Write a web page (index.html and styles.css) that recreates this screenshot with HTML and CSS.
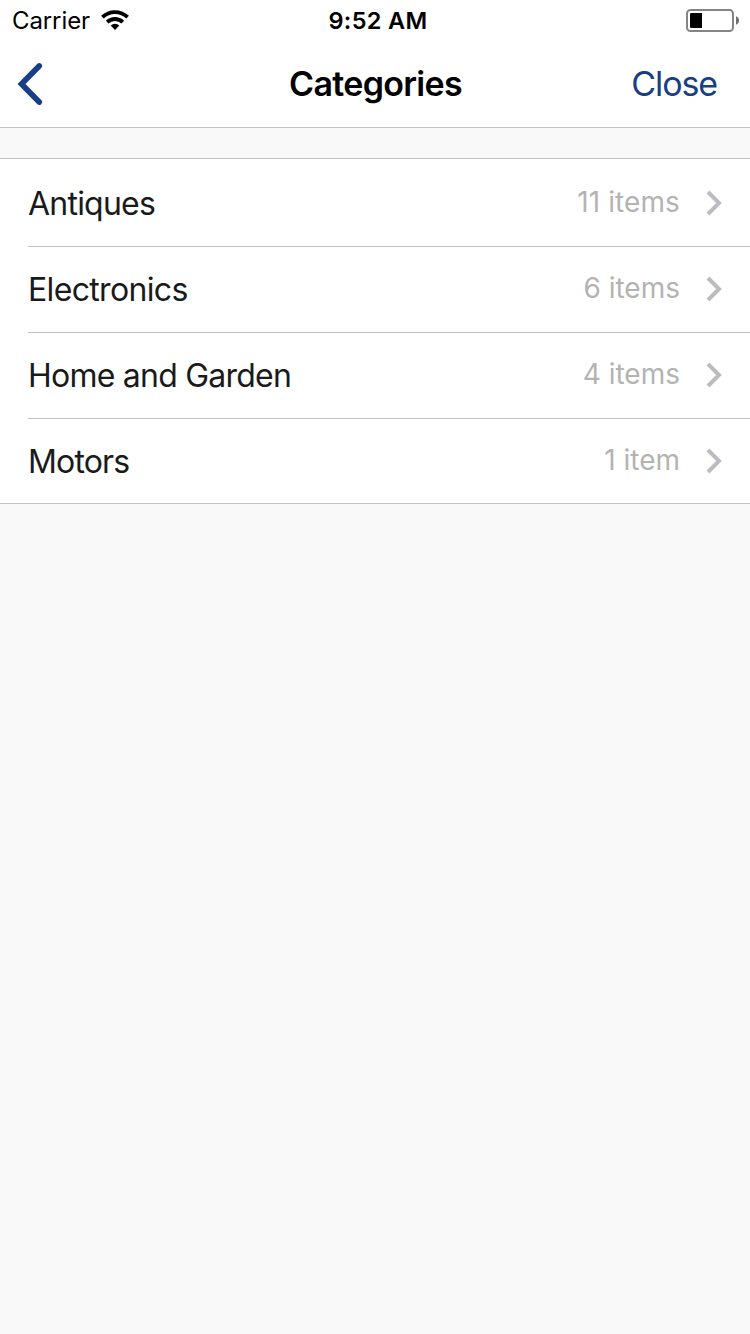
FILE: index.html
```html
<!DOCTYPE html>
<html lang="en">
<head>
<meta charset="utf-8">
<title>Categories</title>
<link rel="stylesheet" href="styles.css">
</head>
<body>
<header class="header">
  <div class="status">
    <div class="status-left">
      <span class="carrier">Carrier</span>
      <svg class="wifi" width="28" height="20" viewBox="0 0 28 20">
        <path d="M1.4 7.2A18.2 18.2 0 0 1 26.6 7.2" fill="none" stroke="#000" stroke-width="3.9"/>
        <path d="M6.2 12.1A11.4 11.4 0 0 1 21.8 12.1" fill="none" stroke="#000" stroke-width="3.8"/>
        <path d="M9.7 15.4A6.4 6.4 0 0 1 18.3 15.4L14 20Z"/>
      </svg>
    </div>
    <span class="time">9:52 AM</span>
    <svg class="battery" width="54" height="23" viewBox="0 0 54 23">
      <rect x="1" y="1" width="46" height="21" rx="3.5" fill="none" stroke="#858585" stroke-width="2"/>
      <path d="M5.2 4H16V19H5.2Q4 19 4 17.8V5.2Q4 4 5.2 4Z"/>
      <path d="M50 7.3Q53 8.4 53 11.5T50 15.7Z" fill="#707070"/>
    </svg>
  </div>
  <nav class="nav">
    <svg class="back" width="28" height="44" viewBox="0 0 28 44"><path d="M23.2 3.9L5.5 22L23.2 40.1" fill="none" stroke="#173e86" stroke-width="5.7" stroke-linecap="round" stroke-linejoin="miter"/></svg>
    <h1 class="title">Categories</h1>
    <span class="close">Close</span>
  </nav>
</header>
<ul class="list">
  <li class="row first"><span class="name">Antiques</span><span class="count eleven">11 items</span><svg class="chevron" width="18" height="26" viewBox="0 0 18 26"><path d="M2 2L13 13L2 24" fill="none" stroke="#bcbbc2" stroke-width="4"/></svg></li>
  <li class="row"><span class="name electronics">Electronics</span><span class="count">6 items</span><svg class="chevron" width="18" height="26" viewBox="0 0 18 26"><path d="M2 2L13 13L2 24" fill="none" stroke="#bcbbc2" stroke-width="4"/></svg></li>
  <li class="row"><span class="name">Home and Garden</span><span class="count">4 items</span><svg class="chevron" width="18" height="26" viewBox="0 0 18 26"><path d="M2 2L13 13L2 24" fill="none" stroke="#bcbbc2" stroke-width="4"/></svg></li>
  <li class="row last"><span class="name motors">Motors</span><span class="count">1 item</span><svg class="chevron" width="18" height="26" viewBox="0 0 18 26"><path d="M2 2L13 13L2 24" fill="none" stroke="#bcbbc2" stroke-width="4"/></svg></li>
</ul>
</body>
</html>
```
FILE: styles.css
```css
* { box-sizing: border-box; }
body {
  margin: 0;
  min-height: 1334px;
  background: #f9f9f9;
  font-family: Inter, "Liberation Sans", sans-serif;
}
svg { display: block; flex: none; }
.header {
  height: 128px;
  background: #fff;
  border-bottom: 1px solid #c1c1c1;
}
.status {
  display: grid;
  grid-template-columns: 1fr auto 1fr;
  align-items: start;
  height: 40px;
  padding: 6px 10px 0 12px;
}
.status-left { display: flex; align-items: flex-start; gap: 11px; }
.carrier { font-size: 24px; line-height: 29px; letter-spacing: -0.1px; color: #000; }
.wifi { margin-top: 4px; }
.time { font-size: 23.5px; line-height: 29px; font-weight: 600; letter-spacing: 0.35px; margin-left: 4px; }
.battery { justify-self: end; margin-top: 3px; }
.nav {
  display: grid;
  grid-template-columns: 1fr auto 1fr;
  align-items: start;
  height: 87px;
  padding: 23px 15px 0 16px;
}
.back { margin-top: -1px; }
.title { margin: 0; font-size: 34px; line-height: 41px; font-weight: 600; letter-spacing: -0.7px; }
.close { justify-self: end; margin-right: 18px; font-size: 34px; line-height: 41px; letter-spacing: -1.1px; color: #173e86; }
.list {
  margin: 30px 0 0;
  padding: 0 0 0 28px;
  list-style: none;
  background: #fff;
  border-top: 1px solid #c1c1c1;
  border-bottom: 1px solid #c1c1c1;
}
.row {
  display: flex;
  align-items: flex-start;
  height: 86px;
  padding-right: 26px;
  border-bottom: 1px solid #c1c1c1;
}
.first { height: 88px; padding-top: 2px; }
.last { height: 84px; border-bottom: 0; }
.name { flex: 1; padding-top: 23px; font-size: 32px; line-height: 39px; letter-spacing: -0.77px; color: #1a1a1a; }
.electronics { letter-spacing: -0.66px; }
.motors { letter-spacing: -0.85px; }
.count { padding-top: 24px; font-size: 28px; line-height: 34px; color: #b3b3b3; }
.eleven { letter-spacing: 0.1px; }
.chevron { margin: 29px 0 0 26px; }
```
